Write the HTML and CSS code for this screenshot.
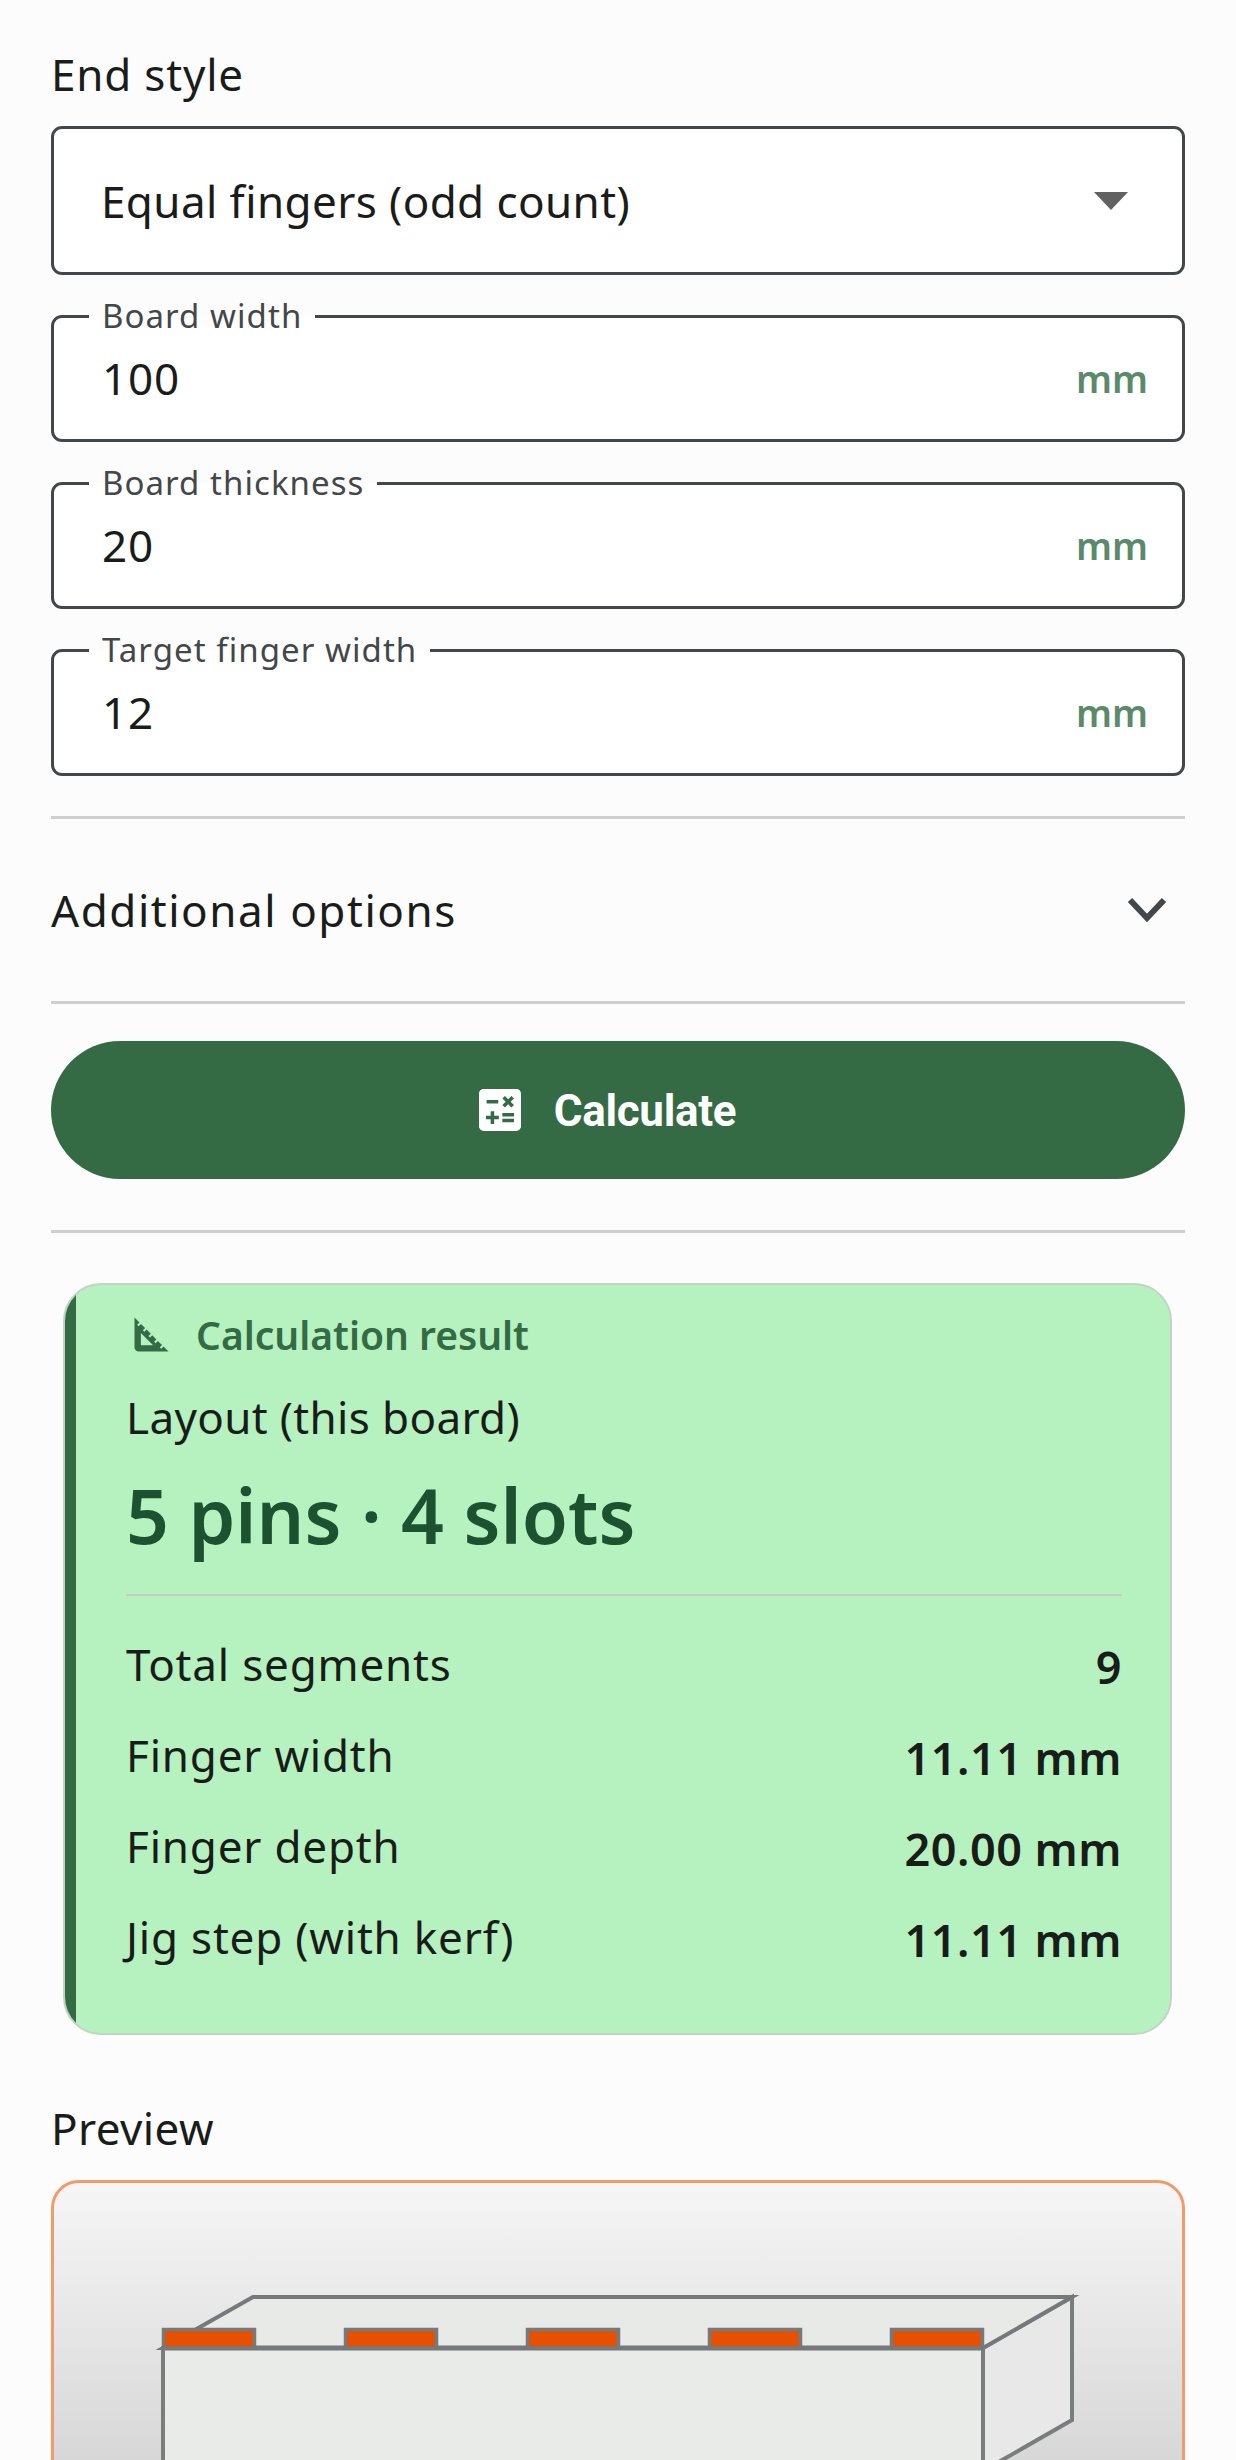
FILE: index.html
```html
<!doctype html>
<html>
  <head>
    <meta charset="utf-8" />
    <title>Finger joint calculator</title>
    <link rel="stylesheet" href="styles.css">
  </head>
  <body>
    <div class="page">
      <div class="section-label">End style</div>
      <div class="select-box">
        <span>Equal fingers (odd count)</span>
        <span class="select-arrow"></span>
      </div>

      <div class="field">
        <span class="field-label">Board width</span>
        <span class="field-value">100</span>
        <span class="field-unit">mm</span>
      </div>
      <div class="field">
        <span class="field-label">Board thickness</span>
        <span class="field-value">20</span>
        <span class="field-unit">mm</span>
      </div>
      <div class="field">
        <span class="field-label">Target finger width</span>
        <span class="field-value">12</span>
        <span class="field-unit">mm</span>
      </div>

      <div class="expander">
        <span>Additional options</span>
        <svg class="chevron" viewBox="0 0 40 26"><path d="M3 3 L20 21 L37 3" /></svg>
      </div>

      <button class="calc-btn">
        <svg class="calc-icon" viewBox="0 0 24 24"><path fill-rule="evenodd" d="M19,3H5C3.9,3,3,3.9,3,5v14c0,1.1,0.9,2,2,2h14c1.1,0,2-0.9,2-2V5C21,3.9,20.1,3,19,3z M13.03,7.06L14.09,6l1.41,1.41L16.91,6l1.06,1.06l-1.41,1.41l1.41,1.41l-1.06,1.06L15.5,9.54l-1.41,1.41l-1.06-1.06l1.41-1.41L13.03,7.06z M6.25,7.72h5v1.5h-5V7.72z M11.5,16h-2v2H8v-2H6v-1.5h2v-2h1.5v2h2V16z M18,17.25h-5v-1.5h5V17.25z M18,14.75h-5v-1.5h5V14.75z" /></svg>
        <span class="calc-text">Calculate</span>
      </button>

      <div class="rule"></div>

      <div class="result">
        <div class="result-strip"></div>
        <div class="result-body">
          <div class="result-head">
            <svg class="result-icon" viewBox="0 0 24 24"><path d="M17.66,17.66l-1.06,1.06l-0.71-0.71l1.06-1.06l-1.94-1.94l-1.06,1.06l-0.71-0.71l1.06-1.06l-1.94-1.94l-1.06,1.06l-0.71-0.71l1.06-1.06L9.7,9.7l-1.06,1.06l-0.71-0.71l1.06-1.06L7.05,7.05L5.99,8.11L5.28,7.4l1.06-1.06L4,4v14c0,1.1,0.9,2,2,2h14L17.66,17.66z M7,17v-5.76L12.76,17H7z" /></svg>
            <span>Calculation result</span>
          </div>
          <div class="result-sub">Layout (this board)</div>
          <div class="result-big">5 pins · 4 slots</div>
          <div class="result-rule"></div>
          <div class="result-row"><span>Total segments</span><b>9</b></div>
          <div class="result-row"><span>Finger width</span><b>11.11 mm</b></div>
          <div class="result-row"><span>Finger depth</span><b>20.00 mm</b></div>
          <div class="result-row"><span>Jig step (with kerf)</span><b>11.11 mm</b></div>
        </div>
      </div>

      <div class="section-label preview-label">Preview</div>
      <div class="preview">
        <svg class="preview-svg" viewBox="54 2183 1128 500">
          <polygon class="face-side" points="983,2348 1072,2297 1072,2420 983,2471" />
          <polygon class="face-top" points="163,2348 253,2297 1072,2297 983,2348" />
          <rect class="face-front" x="163" y="2348" width="820" height="320" />
          <line class="edge-top" x1="163" y1="2348" x2="983" y2="2348" />
          <rect class="tooth" x="163.5" y="2329.5" width="91" height="18.5" />
          <rect class="tooth" x="345.5" y="2329.5" width="91" height="18.5" />
          <rect class="tooth" x="527.5" y="2329.5" width="91" height="18.5" />
          <rect class="tooth" x="709.5" y="2329.5" width="91" height="18.5" />
          <rect class="tooth" x="891.5" y="2329.5" width="91" height="18.5" />
        </svg>
      </div>
    </div>
  </body>
</html>
```
FILE: styles.css
```css
html, body {
    margin: 0;
    height: 2460px;
    overflow: hidden;
    background: #fcfcfc;
}
.page {
    padding: 44px 51px 0;
    font-family: "Noto Sans", sans-serif;
    font-size: 44px;
    color: #1a1c1a;
    letter-spacing: 0.8px;
}
.section-label {
    height: 60px;
    line-height: 60px;
    margin-bottom: 22px;
}
.select-box {
    box-sizing: border-box;
    height: 149px;
    padding: 0 54px 0 47px;
    display: flex;
    align-items: center;
    justify-content: space-between;
    background: #fff;
    border: 3px solid #44474a;
    border-radius: 11px;
    letter-spacing: 0.4px;
}
.select-arrow {
    width: 0;
    height: 0;
    border-left: 17px solid transparent;
    border-right: 17px solid transparent;
    border-top: 18px solid #616161;
}
.field {
    box-sizing: border-box;
    position: relative;
    height: 127.5px;
    margin-top: 39.5px;
    padding: 0 34px 0 48px;
    display: flex;
    align-items: center;
    justify-content: space-between;
    background: #fff;
    border: 3px solid #44474a;
    border-radius: 11px;
}
.field-label {
    position: absolute;
    left: 35px;
    top: -20px;
    padding: 0 13px;
    height: 36px;
    line-height: 36px;
    font-size: 33px;
    letter-spacing: 1.05px;
    color: #44474a;
    background: linear-gradient(#fcfcfc 50%, #fff 50%);
}
.field-unit {
    font-size: 37.5px;
    font-weight: 600;
    letter-spacing: 0;
    color: #5a8a69;
}
.expander {
    height: 182px;
    margin-top: 40px;
    display: flex;
    align-items: center;
    justify-content: space-between;
    border-top: 3px solid #cfcfcf;
    border-bottom: 3px solid #cfcfcf;
    letter-spacing: 1.55px;
}
.chevron {
    width: 40px;
    height: 26px;
    margin-right: 18px;
    fill: none;
    stroke: #44474a;
    stroke-width: 6;
}
.calc-btn {
    width: 100%;
    height: 138px;
    margin-top: 37px;
    padding: 0 28px 0 0;
    display: flex;
    align-items: center;
    justify-content: center;
    gap: 26px;
    border: none;
    border-radius: 69px;
    background: #346b44;
    color: #fff;
    font-family: Roboto, sans-serif;
    font-size: 44px;
    font-weight: 700;
    letter-spacing: -0.3px;
}
.calc-text {
    padding-top: 2px;
}
.calc-icon {
    width: 56px;
    height: 56px;
    fill: #fff;
}
.rule {
    height: 3px;
    margin-top: 51px;
    background: #cfcfcf;
}
.result {
    box-sizing: border-box;
    height: 752px;
    margin: 50px 13px 0 12px;
    display: flex;
    overflow: hidden;
    background: #b5f2bf;
    border: 2px solid #c5d3c5;
    border-radius: 38px;
}
.result-strip {
    width: 11px;
    background: #346b44;
}
.result-body {
    flex: 1;
    padding: 0 48px 0 50px;
}
.result-head {
    height: 50px;
    margin-top: 24px;
    display: flex;
    align-items: center;
    gap: 19px;
    font-size: 39px;
    font-weight: 600;
    letter-spacing: 0;
    color: #346b44;
}
.result-icon {
    width: 51px;
    height: 51px;
    fill: #346b44;
}
.result-sub {
    height: 60px;
    line-height: 60px;
    margin-top: 28px;
    letter-spacing: 0.35px;
}
.result-big {
    height: 100px;
    line-height: 100px;
    margin-top: 18px;
    font-size: 75px;
    font-weight: 600;
    letter-spacing: 0;
    color: #1d5231;
}
.result-rule {
    height: 2px;
    margin-top: 29px;
    margin-bottom: 22px;
    background: #c6cbc4;
}
.result-row {
    height: 91px;
    display: flex;
    align-items: center;
    justify-content: space-between;
}
.result-row b {
    padding-top: 6px;
    font-size: 45px;
    font-weight: 600;
    letter-spacing: 0.5px;
}
.preview-label {
    margin-top: 63px;
    margin-bottom: 22px;
    letter-spacing: 0.4px;
}
.preview {
    box-sizing: border-box;
    height: 500px;
    overflow: hidden;
    border: 3px solid #f19a6a;
    border-radius: 28px;
    background: linear-gradient(#f6f6f6, #bfbfbf);
}
.preview-svg {
    display: block;
    width: 1128px;
    height: 500px;
}
.face-side {
    fill: #e8e8e8;
    stroke: #7a7d7e;
    stroke-width: 4;
}
.face-top {
    fill: #e8eae7;
    stroke: #75797b;
    stroke-width: 4;
}
.face-front {
    fill: #e9ebe8;
    stroke: #7a7d7e;
    stroke-width: 4;
}
.edge-top {
    stroke: #75797b;
    stroke-width: 5;
}
.tooth {
    fill: #e65100;
    stroke: #75797b;
    stroke-width: 3.5;
}
```
